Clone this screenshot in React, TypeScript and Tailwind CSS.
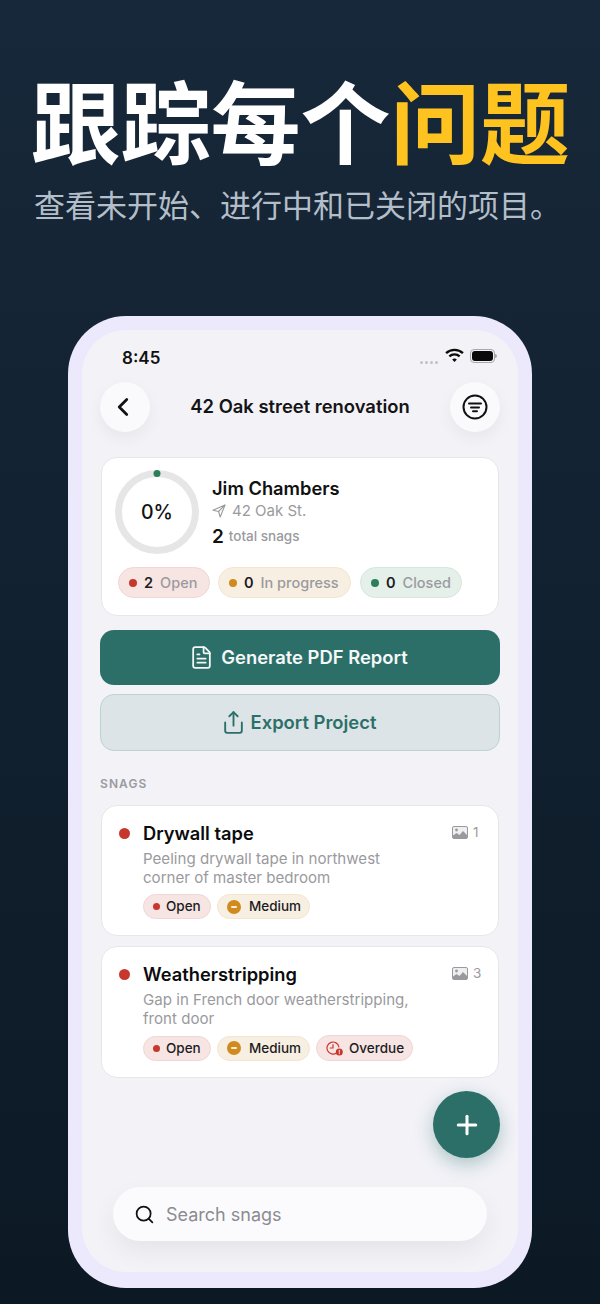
import React from "react";
import { ChevronLeft, FileText, Share, Search, Plus } from "lucide-react";

const cjk = { fontFamily: '"Noto Sans CJK SC", sans-serif' };

function ImageIcon() {
  return (
    <svg width="16" height="13" viewBox="0 0 16 13" fill="none">
      <rect x="0.5" y="0.5" width="15" height="12" rx="1.5" fill="#efeff0" stroke="#9a9a9e" />
      <circle cx="4.5" cy="4" r="1.4" fill="#9a9a9e" />
      <path d="M1 12.5V9.5l3.5-2.5 3 2 3.5-4 4 4v3.5z" fill="#9a9a9e" />
    </svg>
  );
}

function Pill({ className, children }: { className: string; children: React.ReactNode }) {
  return <div className={"flex items-center rounded-full border " + className}>{children}</div>;
}

function StatPill({ dot, n, label, cls, w }: { dot: string; n: string; label: string; cls: string; w: string }) {
  return (
    <Pill className={"h-[31px] pl-[10px] text-[14.5px] " + cls + " " + w}>
      <span className={"size-[8px] rounded-full " + dot} />
      <span className="ml-[7px] font-semibold text-[#1c1c1e]">{n}</span>
      <span className="ml-[7px] font-medium text-[#9a9a9e]">{label}</span>
    </Pill>
  );
}

const redPill = "bg-[#f7e5e4] border-[#f0d6d4]";
const amberPill = "bg-[#f8efe3] border-[#f3e5d0]";

function OpenTag() {
  return (
    <Pill className={"h-[25px] w-[68px] pl-[9px] text-[13.5px] font-medium text-[#1c1c1e] " + redPill}>
      <span className="size-[7px] rounded-full bg-[#c8372d]" />
      <span className="ml-[6px]">Open</span>
    </Pill>
  );
}

function MediumTag() {
  return (
    <Pill className={"h-[25px] w-[93px] pl-[9px] text-[13.5px] font-medium text-[#1c1c1e] " + amberPill}>
      <svg width="14" height="14" viewBox="0 0 14 14">
        <circle cx="7" cy="7" r="7" fill="#d08a1e" />
        <rect x="4" y="6" width="6" height="2" rx="1" fill="#fbeedd" />
      </svg>
      <span className="ml-[8px]">Medium</span>
    </Pill>
  );
}

function OverdueTag() {
  return (
    <Pill className={"h-[26px] w-[97px] pl-[9px] text-[13.5px] font-medium text-[#1c1c1e] " + redPill}>
      <svg width="17" height="15" viewBox="0 0 17 15" fill="none">
        <path d="M10.5 11.9A6 6 0 1 1 12.9 6" stroke="#c8372d" strokeWidth="1.2" strokeLinecap="round" />
        <path d="M7 3.6V7H4.2" stroke="#c8372d" strokeWidth="1.2" strokeLinecap="round" strokeLinejoin="round" />
        <circle cx="13.3" cy="11" r="3.5" fill="#c8372d" />
        <rect x="12.8" y="8.9" width="1" height="2.8" fill="#fbe9e8" />
        <rect x="12.8" y="12.1" width="1" height="1" fill="#fbe9e8" />
      </svg>
      <span className="ml-[6px]">Overdue</span>
    </Pill>
  );
}

function SnagCard({ title, line1, line2, count, tags, h }: { title: string; line1: string; line2: string; count: string; tags: React.ReactNode; h: string }) {
  return (
    <div className={"flex rounded-[16px] border border-[#e7e7ea] bg-white pl-[17px] pr-[16px] pt-[14px] " + h}>
      <span className="mt-[8px] size-[11px] shrink-0 rounded-full bg-[#c8372d]" />
      <div className="ml-[14px] flex-1 -translate-x-[1px]">
        <div className="text-[18.3px] font-semibold leading-[26px] text-[#0c0c0e]">{title}</div>
        <div className="mt-[3px] text-[15.1px] leading-[19px] text-[#9a9a9e]">
          <div>{line1}</div>
          <div>{line2}</div>
        </div>
        <div className="mt-[7px] flex items-center gap-[6px]">{tags}</div>
      </div>
      <div className="mt-[2px] flex h-[20px] items-center gap-[5px] text-[13.5px] text-[#9a9a9e]">
        <ImageIcon />
        <span className="w-[9px]">{count}</span>
      </div>
    </div>
  );
}

export default function App() {
  return (
    <div
      className="h-[1304px] w-[600px] overflow-hidden bg-gradient-to-b from-[#17283a] to-[#0c1925]"
      style={{ fontFamily: 'Inter, "Noto Sans CJK SC", sans-serif' }}
    >
      <div className="pl-[31px] pt-[60px] whitespace-nowrap">
        <h1 className="text-[90px] font-bold leading-[116px] text-white" style={{ ...cjk, letterSpacing: "-0.2px" }}>
          跟踪每个<span className="text-[#fec31e]">问题</span>
        </h1>
        <p className="ml-[3px] mt-[5px] text-[31px] leading-[46px] text-[#b4bec8]" style={cjk}>
          查看未开始、进行中和已关闭的项目。
        </p>
      </div>

      <div className="ml-[68px] mt-[89px] h-[972px] w-[464px] rounded-[58px] bg-[#ece9fc] p-[14px]">
        <div className="relative flex h-[942px] flex-col rounded-[44px] bg-[#f2f2f7] px-[18px]">
          <div className="flex h-[52px] items-start justify-between pl-[22px] pr-[3px] pt-[17px]">
            <span className="text-[17px] font-semibold leading-[22px] text-[#111]">8:45</span>
            <div className="flex items-center gap-[6px] pt-[2px]">
              <svg width="19" height="15" viewBox="0 0 20 16" className="mt-[-1px]">
                <path d="M1 5.5a13 13 0 0 1 18 0" fill="none" stroke="#0a0a0a" strokeWidth="2.4" />
                <path d="M4.5 9a8 8 0 0 1 11 0" fill="none" stroke="#0a0a0a" strokeWidth="2.4" />
                <path d="M7.5 12.3a3.6 3.6 0 0 1 5 0L10 15z" fill="#0a0a0a" />
              </svg>
              <div className="flex items-center">
                <div className="h-[14px] w-[25px] rounded-[4px] border border-[#a8a8ac] p-[1px]">
                  <div className="h-full rounded-[3px] bg-[#0a0a0a]" />
                </div>
                <div className="h-[4px] w-[2px] rounded-r bg-[#a8a8ac]" />
              </div>
            </div>
            <div className="absolute right-[80px] top-[31px] flex gap-[2px]">
              <span className="size-[3px] rounded-full bg-[#c2c2c6]" />
              <span className="size-[3px] rounded-full bg-[#c2c2c6]" />
              <span className="size-[3px] rounded-full bg-[#c2c2c6]" />
              <span className="size-[3px] rounded-full bg-[#c2c2c6]" />
            </div>
          </div>

          <div className="flex h-[50px] items-center justify-between">
            <div className="flex size-[50px] items-center justify-center rounded-full bg-[#fafafc] shadow-[0_6px_16px_rgba(0,0,0,0.05)]">
              <ChevronLeft size={30} strokeWidth={2.2} className="mr-[4px] text-[#111]" />
            </div>
            <span className="text-[18.4px] font-semibold text-[#141416]">42 Oak street renovation</span>
            <div className="flex size-[50px] items-center justify-center rounded-full bg-[#fafafc] shadow-[0_6px_16px_rgba(0,0,0,0.05)]">
              <svg width="26" height="26" viewBox="0 0 26 26" fill="none" stroke="#111" strokeWidth="2" strokeLinecap="round">
                <circle cx="13" cy="13" r="11.5" />
                <path d="M7 9.5h12M9 13.5h8M11 17.2h4" />
              </svg>
            </div>
          </div>

          <div className="ml-[1px] mr-[1px] mt-[25px] h-[159px] rounded-[16px] border border-[#e7e7ea] bg-white pl-[13px] pt-[12px]">
            <div className="flex">
              <div className="relative flex size-[84px] items-center justify-center rounded-full border-[7px] border-[#e6e6e6] pt-[2px]">
                <span className="text-[19.5px] font-medium text-[#111]">0%</span>
                <span className="absolute left-1/2 top-[-7px] size-[7px] -translate-x-1/2 rounded-full bg-[#2b8058]" />
              </div>
              <div className="ml-[13px] pt-[6px]">
                <div className="text-[18.3px] font-semibold leading-[24px] text-[#111]">Jim Chambers</div>
                <div className="flex items-center text-[15px] leading-[21px] text-[#9a9a9e]">
                  <svg width="14" height="14" viewBox="0 0 14 14" fill="none" stroke="#9a9a9e" strokeWidth="1.1" strokeLinejoin="round">
                    <path d="M13 1 1 6.3l5.6 1.2L8.2 13z" />
                    <path d="M13 1 6.6 7.5" />
                  </svg>
                  <span className="ml-[6px]">42 Oak St.</span>
                </div>
                <div className="mt-[3px] flex items-center">
                  <span className="text-[19px] font-semibold leading-[25px] text-[#111]">2</span>
                  <span className="ml-[5px] text-[13.5px] font-medium text-[#9a9a9e]">total snags</span>
                </div>
              </div>
            </div>
            <div className="ml-[3px] mt-[13px] flex gap-[8px]">
              <StatPill dot="bg-[#c8372d]" n="2" label="Open" cls={redPill} w="w-[92px]" />
              <StatPill dot="bg-[#d08a1e]" n="0" label="In progress" cls={amberPill} w="w-[133px]" />
              <StatPill dot="bg-[#2b8058]" n="0" label="Closed" cls="bg-[#e5f0ea] border-[#d5e6dc] ml-[1px]" w="w-[102px]" />
            </div>
          </div>

          <div className="mt-[14px] flex h-[55px] items-center justify-center gap-[7px] rounded-[14px] bg-[#2c6f69] pr-[3px] text-[18.4px] font-semibold text-[#f4f8f7]">
            <FileText size={25} strokeWidth={1.7} />
            <span>Generate PDF Report</span>
          </div>
          <div className="mt-[9px] flex h-[57px] items-center justify-center gap-[5px] rounded-[14px] border-[1.5px] border-[#bcd3d2] bg-[#dce4e7] pr-[3px] text-[18.4px] font-semibold text-[#2c6f69]">
            <Share size={25} strokeWidth={1.8} />
            <span>Export Project</span>
          </div>

          <div className="mt-[26px] text-[12px] font-semibold leading-[14px] tracking-[0.09em] text-[#9a9a9e]">SNAGS</div>

          <div className="mx-[1px] mt-[14px] flex flex-col gap-[10px]">
            <SnagCard
              h="h-[131px]"
              title="Drywall tape"
              line1="Peeling drywall tape in northwest"
              line2="corner of master bedroom"
              count="1"
              tags={<><OpenTag /><MediumTag /></>}
            />
            <SnagCard
              h="h-[132px]"
              title="Weatherstripping"
              line1="Gap in French door weatherstripping,"
              line2="front door"
              count="3"
              tags={<><OpenTag /><MediumTag /><OverdueTag /></>}
            />
          </div>

          <div className="absolute right-[18px] top-[761px] flex size-[67px] items-center justify-center rounded-full bg-[#2c6f69] text-white shadow-[0_6px_18px_rgba(44,111,105,0.35)]">
            <Plus size={30} strokeWidth={2.4} />
          </div>

          <div className="mx-[13px] mt-[109px] flex h-[54px] items-center rounded-full bg-[#fbfbfe] pl-[21px] shadow-[0_10px_24px_rgba(0,0,0,0.06)]">
            <Search size={21} strokeWidth={2} className="text-[#111]" />
            <span className="ml-[11px] text-[18px] text-[#8b8b90]">Search snags</span>
          </div>
        </div>
      </div>
    </div>
  );
}
